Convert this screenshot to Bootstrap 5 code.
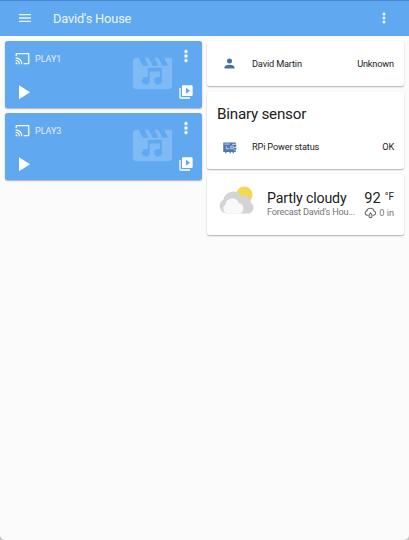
<!DOCTYPE html>
<html lang="en">
<head>
<meta charset="utf-8">
<meta name="viewport" content="width=device-width, initial-scale=1">
<title>David's House</title>
<link href="https://cdn.jsdelivr.net/npm/bootstrap@5.3.0/dist/css/bootstrap.min.css" rel="stylesheet">
<style>
html { background: #c4c4c4; }
body { font-family: Roboto, "Liberation Sans", sans-serif; font-size: 9.2px; letter-spacing: -.16px; line-height: 1.2; color: #212121; background: transparent; }
svg { display: block; fill: currentColor; flex: none; }
.shell { height: 540px; background: #fbfbfb; border-radius: 0 0 5px 5px; }
.topbar { height: 36px; background: #60a9f1; border-top: 1px solid #4b88d4; padding: 0 17.5px 1px 17px; color: #eaf4fe; }
.topbar h1 { font-size: 12.8px; font-weight: 400; margin: 1px 0 0 20px; letter-spacing: -.15px; }
.board { padding: 5px; gap: 5px; }
.stack { flex: 1 1 0; min-width: 0; gap: 5px; }
.tile { border: 0; border-radius: 2.5px; box-shadow: 0 1px 1.5px rgba(0,0,0,.3); color: #212121; }
.player { height: 67px; background: #60a9f1; color: #fff; padding: 6px 7px 4.5px 6px; }
.player .name { font-size: 9px; color: #e2f0fd; margin: 1px 0 0 5px; letter-spacing: -.05px; }
.player .head { padding: 4px 0 0 4px; }
.player .art { color: #7fbaf5; margin: 2.5px 1.5px 0 0; }
.player .side { width: 18px; }
.row-line { padding: 0 10px 0 15px; }
.row-line .label { margin-left: 15px; }
.person { height: 45px; }
.sensor { height: 77px; margin-top: 1px; }
.sensor h2 { font-size: 15.2px; letter-spacing: -.22px; font-weight: 400; margin: 13px 0 0 10px; line-height: 18px; }
.sensor .row-line { height: 20px; margin-top: 14px; }
.weather { height: 61px; padding: 10px 10px 0 12px; }
.weather .cond { margin-left: 13px; min-width: 0; }
.weather .big { font-size: 14.2px; line-height: 15px; margin-top: 7px; white-space: nowrap; }
.weather .temp { font-size: 14.6px; letter-spacing: 0; }
.weather .dim { font-size: 9.2px; letter-spacing: -.03px; line-height: 11px; color: #757575; white-space: nowrap; }
.weather .cond .dim { letter-spacing: -.23px; }
.weather .unit { font-size: 10px; line-height: 12px; }
.rain { fill: none; stroke: #666; stroke-width: 2; margin-right: 2px; }
.state-icon { color: #4a6f9f; }
</style>
</head>
<body>
<svg class="d-none" xmlns="http://www.w3.org/2000/svg">
  <symbol id="dots" viewBox="0 0 24 24"><path d="M12 16a2 2 0 1 1 0 4 2 2 0 0 1 0-4m0-6a2 2 0 1 1 0 4 2 2 0 0 1 0-4m0-6a2 2 0 1 1 0 4 2 2 0 0 1 0-4z" stroke="currentColor" stroke-width=".6"/></symbol>
  <symbol id="cast" viewBox="0 0 24 24"><path d="M1 10v2a9 9 0 0 1 9 9h2A11 11 0 0 0 1 10m0 4v2a5 5 0 0 1 5 5h2a7 7 0 0 0-7-7m0 4v3h3a3 3 0 0 0-3-3M21 3H3c-1.1 0-2 .9-2 2v3h2V5h18v14h-7v2h7a2 2 0 0 0 2-2V5a2 2 0 0 0-2-2z"/></symbol>
  <symbol id="play" viewBox="0 0 24 24"><path d="M8 5.14v14l11-7z"/></symbol>
  <symbol id="library" viewBox="0 0 24 24"><path fill-rule="evenodd" d="M4 6H2v14a2 2 0 0 0 2 2h14v-2H4zM20 2H8a2 2 0 0 0-2 2v12a2 2 0 0 0 2 2h12a2 2 0 0 0 2-2V4a2 2 0 0 0-2-2m-8 12.5v-9l6 4.5z"/></symbol>
  <symbol id="clip" viewBox="0 0 24 24"><path fill-rule="evenodd" d="M18 4l2 4h-3l-2-4h-2l2 4h-3l-2-4H8l2 4H7L5 4H4a2 2 0 0 0-2 2v12a2 2 0 0 0 2 2h16a2 2 0 0 0 2-2V4zM16.8 9v6.7a2 2 0 1 1-1-1.73V11h-5.2v4.7a2 2 0 1 1-1-1.73V9z"/></symbol>
</svg>
<div class="shell">
  <nav class="topbar d-flex align-items-center">
    <svg width="16" height="16" viewBox="0 0 24 24"><path d="M3 6h18v2H3zm0 5h18v2H3zm0 5h18v2H3z"/></svg>
    <h1>David's House</h1>
    <svg class="ms-auto" width="16" height="16"><use href="#dots"/></svg>
  </nav>
  <main class="board d-flex align-items-start">
    <section class="stack d-flex flex-column">
      <article class="card tile player d-flex flex-row">
        <div class="d-flex flex-column justify-content-between flex-grow-1">
          <div class="head d-flex align-items-center"><svg width="15" height="15"><use href="#cast"/></svg><span class="name">PLAY1</span></div>
          <svg width="24" height="24"><use href="#play"/></svg>
        </div>
        <svg class="art" width="47" height="47"><use href="#clip"/></svg>
        <div class="side d-flex flex-column align-items-center justify-content-between">
          <svg width="18" height="18"><use href="#dots"/></svg>
          <svg class="mb-1" width="16" height="16"><use href="#library"/></svg>
        </div>
      </article>
      <article class="card tile player d-flex flex-row">
        <div class="d-flex flex-column justify-content-between flex-grow-1">
          <div class="head d-flex align-items-center"><svg width="15" height="15"><use href="#cast"/></svg><span class="name">PLAY3</span></div>
          <svg width="24" height="24"><use href="#play"/></svg>
        </div>
        <svg class="art" width="47" height="47"><use href="#clip"/></svg>
        <div class="side d-flex flex-column align-items-center justify-content-between">
          <svg width="18" height="18"><use href="#dots"/></svg>
          <svg class="mb-1" width="16" height="16"><use href="#library"/></svg>
        </div>
      </article>
    </section>
    <section class="stack d-flex flex-column">
      <article class="card tile person justify-content-center">
        <div class="row-line d-flex align-items-center">
          <svg class="state-icon" width="15" height="15" viewBox="0 0 24 24"><path d="M12 4a4 4 0 1 1 0 8 4 4 0 0 1 0-8m0 10c4.42 0 8 1.79 8 4v2H4v-2c0-2.21 3.58-4 8-4z"/></svg>
          <span class="label">David Martin</span><span class="ms-auto">Unknown</span>
        </div>
      </article>
      <article class="card tile sensor">
        <h2>Binary sensor</h2>
        <div class="row-line d-flex align-items-center">
          <svg class="state-icon" width="15" height="15" viewBox="0 0 24 24"><path fill="#4f78ad" d="M2 4h20v3h1v3h-1v2h1v3h-1v4h-3v2h-2v-2h-3v2h-2v-2H7v2H5v-2H2z"/><path fill="none" stroke="#dbe6f3" stroke-width="1.3" d="M4 6.5h8M16 7h6M7 10v4h5M14 10h4v4h-4zM19 12h4M19 16h3"/></svg>
          <span class="label">RPi Power status</span><span class="ms-auto">OK</span>
        </div>
      </article>
      <article class="card tile weather d-flex flex-row">
        <svg width="35" height="32" viewBox="0 0 35 32"><circle cx="25.3" cy="10.7" r="8.2" fill="#f4d84e"/><path fill="#d4d4d4" d="M8 29.5A7.5 7.5 0 0 1 4.5 15.5 10 10 0 0 1 22.7 12.3a6.4 6.4 0 0 1 9.2 6.5A5.9 5.9 0 0 1 28 29.5z"/><path fill="#f9f9f9" d="M8.5 29.5a4.8 4.8 0 0 1-2-8.8 6.8 6.8 0 0 1 13.2-1.6 5.5 5.5 0 0 1 1.5 10.4z"/></svg>
        <div class="cond flex-grow-1">
          <div class="big">Partly cloudy</div>
          <div class="dim">Forecast David's Hou...</div>
        </div>
        <div class="d-flex flex-column align-items-end">
          <div class="big temp d-flex">92<span class="unit ms-1">°F</span></div>
          <div class="dim d-flex align-items-center"><svg class="rain" width="13" height="13" viewBox="0 0 24 24"><path d="M8 17H6A4 4 0 0 1 5 9.2a7 7 0 0 1 13.5 0A4 4 0 0 1 18 17h-2"/><path d="M12 12.5c-4 5-3.5 9 0 9s4-4 0-9z"/></svg>0 in</div>
        </div>
      </article>
    </section>
  </main>
</div>
<script src="https://cdn.jsdelivr.net/npm/bootstrap@5.3.0/dist/js/bootstrap.bundle.min.js"></script>
</body>
</html>
